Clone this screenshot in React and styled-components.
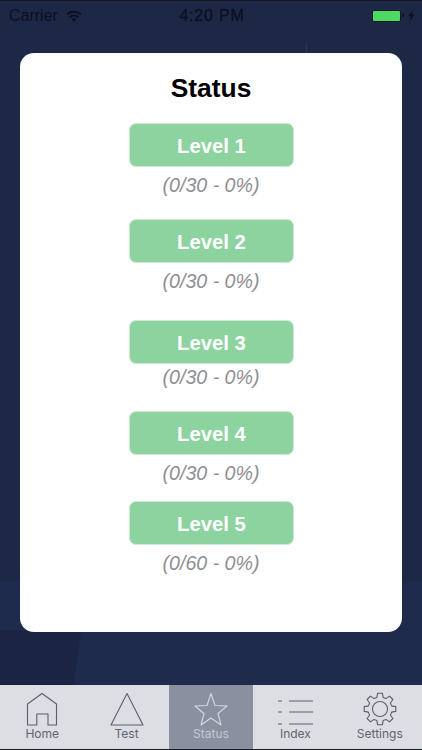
import React from 'react'
import styled, { createGlobalStyle } from 'styled-components'

const GlobalStyle = createGlobalStyle`
  html, body {
    margin: 0;
    padding: 0;
    background: #1e2947;
  }
`
const Screen = styled.div`
  width: 422px;
  height: 750px;
  display: flex;
  flex-direction: column;
  overflow: hidden;
  border-top: 1px solid #10151f;
  box-sizing: border-box;
  background:
    linear-gradient(#2b3650, #2b3650) 306px 42px / 1px 11px no-repeat,
    linear-gradient(98deg, #1b2543 0, #1b2543 80px, #1f2b4c 81px) left bottom / 100% 120px no-repeat,
    linear-gradient(#1d2746 0, #1d2746 578px, #1f2b4c 582px);
  font-family: "Liberation Sans", Arial, sans-serif;
`
const StatusBar = styled.div`
  height: 29px;
  display: grid;
  grid-template-columns: 1fr auto 1fr;
  align-items: center;
  padding: 0 7px 0 9px;
  color: #0b1120;
  font-size: 16px;
`
const Carrier = styled.div`
  display: flex;
  align-items: center;
  gap: 8px;
`
const Clock = styled.div`
  font-size: 16px;
  font-weight: 500;
  letter-spacing: 0.8px;
  -webkit-text-stroke: 0.3px #0b1120;
`
const BatteryWrap = styled.div`
  display: flex;
  align-items: center;
  justify-content: flex-end;
  gap: 7px;
`
const Battery = styled.div`
  position: relative;
  width: 29px;
  height: 12px;
  box-sizing: border-box;
  background: #4cd964;
  border: 1px solid #0d1a26;
  border-radius: 2px;

  &::after {
    content: '';
    position: absolute;
    right: -4px;
    top: 2px;
    width: 2px;
    height: 4px;
    background: #0d1a26;
  }
`
const Body = styled.div`
  flex: 1;
  padding: 23px 20px 53px;
  display: flex;
  min-height: 0;
`
const Card = styled.div`
  flex: 1;
  background: #fff;
  border-radius: 14px;
  display: flex;
  flex-direction: column;
  align-items: center;
`
const Title = styled.h1`
  margin: 19px 0 19px;
  height: 32px;
  line-height: 32px;
  font-size: 26.4px;
  font-weight: 700;
  color: #000;
`
const LevelButton = styled.div`
  width: 165px;
  height: 44px;
  margin-left: 1px;
  padding-top: 2px;
  box-sizing: border-box;
  background: #8dd3a0;
  border: 1px solid #cfe9d6;
  border-radius: 7px;
  display: flex;
  align-items: center;
  justify-content: center;
  color: #fff;
  font-size: 20.3px;
  font-weight: 700;
`
const Score = styled.div`
  margin-top: ${p => p.$top}px;
  margin-bottom: ${p => p.$after}px;
  height: 24px;
  line-height: 24px;
  font-size: 19.6px;
  font-style: italic;
  color: #8e8e93;
`
const TabBar = styled.div`
  height: 65px;
  display: grid;
  grid-template-columns: repeat(5, 1fr);
  background: #dcdee3;
  border-bottom: 1px solid #1b2027;
  box-sizing: border-box;
`
const Tab = styled.div`
  display: flex;
  flex-direction: column;
  align-items: center;
  padding-top: 8px;
  background: ${p => (p.$active ? '#8a909f' : 'transparent')};
  color: ${p => (p.$active ? '#c4c7d0' : '#5f6470')};
  font-family: "Inter", "Liberation Sans", sans-serif;
  font-size: 12px;
  line-height: 14px;
`
const TabIcon = styled.svg`
  width: 36px;
  height: 34px;
  margin-bottom: 0;
  fill: none;
  stroke: ${p => (p.$active ? '#d5d8de' : '#5a5f6c')};
  stroke-width: 1.1;
  stroke-linejoin: round;
  display: block;
  overflow: visible;
`

const levels = [
  { name: 'Level 1', score: '(0/30 - 0%)', top: 6, after: 22 },
  { name: 'Level 2', score: '(0/30 - 0%)', top: 6, after: 27 },
  { name: 'Level 3', score: '(0/30 - 0%)', top: 1, after: 22 },
  { name: 'Level 4', score: '(0/30 - 0%)', top: 6, after: 16 },
  { name: 'Level 5', score: '(0/60 - 0%)', top: 6, after: 0 }
]

// gear outline, 8 teeth, one pointing straight up
const gearPath = () => {
  const pts = []
  for (let i = 0; i < 8; i++) {
    const a = (i * Math.PI) / 4 - Math.PI / 2
    const at = (r, off) => {
      const x = 18 + r * Math.cos(a + off)
      const y = 16 + r * Math.sin(a + off)
      return `${x.toFixed(1)} ${y.toFixed(1)}`
    }
    pts.push(at(12, -0.26), at(16, -0.15), at(16, 0.15), at(12, 0.26))
  }
  return 'M' + pts.join('L') + 'Z'
}

const tabs = [
  {
    label: 'Home',
    icon: <path d="M18 .5 32.500 11v21H24V21H12.800v11H3.500V11z" />
  },
  {
    label: 'Test',
    icon: <path d="M18 .5 34 32H2z" />
  },
  {
    label: 'Status',
    active: true,
    icon: <path d="M18 .5l4 12 12 .5-9 7.500L28 32l-10-7-10 7 3-11.500L2 13l12-.5z" />
  },
  {
    label: 'Index',
    icon: <path d="M1 8h4M12 8h24M1 19h4M12 19h24M1 31h4M12 31h24" />
  },
  {
    label: 'Settings',
    icon: (
      <>
        <path d={gearPath()} />
        <circle cx="18" cy="16" r="7.500" />
      </>
    )
  }
]

export default function App() {
  return (
    <Screen>
      <GlobalStyle />
      <StatusBar>
        <Carrier>
          Carrier
          <svg width="16" height="12" viewBox="0 0 16 12">
            <path fill="#0b1120" d="M8 12 5.600 9.200a3.600 3.600 0 0 1 4.800 0zM4.400 7.900 3.100 6.400a7.400 7.400 0 0 1 9.800 0l-1.300 1.500a5.400 5.400 0 0 0-7.200 0zM1.900 5 .5 3.400a11.300 11.300 0 0 1 15 0L14.100 5a9.200 9.200 0 0 0-12.200 0z" />
          </svg>
        </Carrier>
        <Clock>4:20 PM</Clock>
        <BatteryWrap>
          <Battery />
          <svg width="7" height="11" viewBox="0 0 7 11">
            <path fill="#0b1120" d="M4.500 0 .5 6.200h2.300L2 11l4.500-6.500H4z" />
          </svg>
        </BatteryWrap>
      </StatusBar>
      <Body>
        <Card>
          <Title>Status</Title>
          {levels.map(l => (
            <React.Fragment key={l.name}>
              <LevelButton>{l.name}</LevelButton>
              <Score $top={l.top} $after={l.after}>{l.score}</Score>
            </React.Fragment>
          ))}
        </Card>
      </Body>
      <TabBar>
        {tabs.map(t => (
          <Tab key={t.label} $active={t.active}>
            <TabIcon $active={t.active} viewBox="0 0 36 34">{t.icon}</TabIcon>
            {t.label}
          </Tab>
        ))}
      </TabBar>
    </Screen>
  )
}
